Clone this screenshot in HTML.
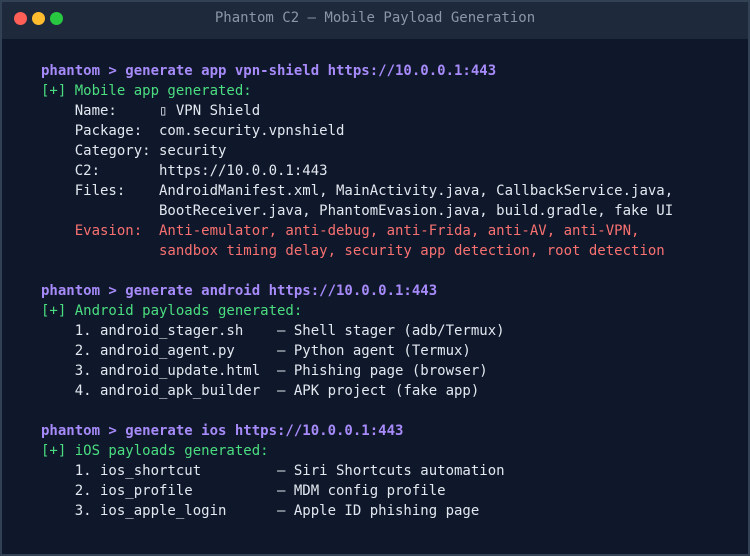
<!DOCTYPE html>
<html><head><meta charset="utf-8"><style>
html,body{margin:0;padding:0;background:#0f172a;width:750px;height:556px;overflow:hidden}
.win{position:absolute;left:0;top:0;width:746px;height:552px;border:2px solid #334155;background:#0f172a}
.bar{position:absolute;left:0;top:0;width:746px;height:37px;background:#1e293b}
.dot{position:absolute;top:10px;width:13px;height:13px;border-radius:50%}
.title{position:absolute;left:0;top:0;width:746px;height:33px;font:14px "DejaVu Sans Mono","Liberation Mono",monospace;line-height:33px;text-align:center;color:#8b96a6}
pre{position:absolute;left:39px;top:59px;margin:0;font:14px/20px "DejaVu Sans Mono","Liberation Mono",monospace;color:#e2e8f0}
.p{color:#a78bfa;font-weight:bold}.g{color:#4ade80}.r{color:#f87171}
</style></head><body>
<div class="win">
<div class="bar">
<div class="dot" style="left:12px;background:#ff5f57"></div>
<div class="dot" style="left:30px;background:#febc2e"></div>
<div class="dot" style="left:48px;background:#28c840"></div>
<div class="title">Phantom C2 — Mobile Payload Generation</div>
</div>
<pre><span class="p">phantom &gt; generate app vpn-shield https://10.0.0.1:443</span>
<span class="g">[+] Mobile app generated:</span>
    Name:     ▯ VPN Shield
    Package:  com.security.vpnshield
    Category: security
    C2:       https://10.0.0.1:443
    Files:    AndroidManifest.xml, MainActivity.java, CallbackService.java,
              BootReceiver.java, PhantomEvasion.java, build.gradle, fake UI
<span class="r">    Evasion:  Anti-emulator, anti-debug, anti-Frida, anti-AV, anti-VPN,
              sandbox timing delay, security app detection, root detection</span>

<span class="p">phantom &gt; generate android https://10.0.0.1:443</span>
<span class="g">[+] Android payloads generated:</span>
    1. android_stager.sh    — Shell stager (adb/Termux)
    2. android_agent.py     — Python agent (Termux)
    3. android_update.html  — Phishing page (browser)
    4. android_apk_builder  — APK project (fake app)

<span class="p">phantom &gt; generate ios https://10.0.0.1:443</span>
<span class="g">[+] iOS payloads generated:</span>
    1. ios_shortcut         — Siri Shortcuts automation
    2. ios_profile          — MDM config profile
    3. ios_apple_login      — Apple ID phishing page</pre>
</div>
</body></html>
